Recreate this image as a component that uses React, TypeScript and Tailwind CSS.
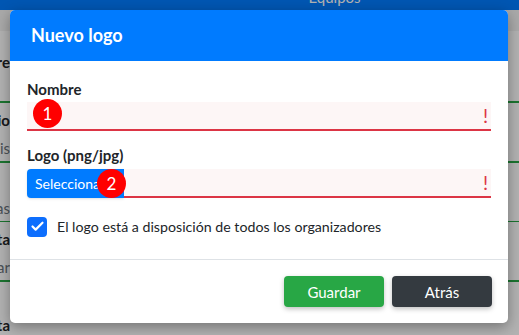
import { Check } from "lucide-react";

function Badge({ n }: { n: number }) {
  return (
    <span className="absolute flex h-[29px] w-[29px] items-center justify-center rounded-full bg-[#ff0000] text-[17px] leading-none text-white">
      {n}
    </span>
  );
}

function Peek({ text, bold, className }: { text: string; bold?: boolean; className: string }) {
  return (
    <div
      className={`flex h-[20px] w-[10px] justify-end whitespace-nowrap text-[15px] leading-[20px] ${
        bold ? "font-bold text-[#212529]" : "text-[#6c757d]"
      } ${className}`}
    >
      {text}
    </div>
  );
}

function Background() {
  return (
    <div className="flex h-full flex-col bg-white">
      <div className="flex h-[12px] items-start justify-center overflow-hidden bg-[#007bff] pl-[150px] text-[15px] leading-[20px] text-white">
        <span className="-mt-[13px]">Equipos</span>
      </div>
      <div className="h-[25px] bg-[#f2f2f2]" />
      <Peek text="Nombre" bold className="mt-[21px]" />
      <div className="mt-[29px] h-[2px] w-full bg-[#28a745]" />
      <Peek text="Descripcio" bold className="mt-[7px]" />
      <Peek text="Mis" className="mt-[8px]" />
      <div className="mt-[3px] h-[2px] w-full bg-[#28a745]" />
      <Peek text="Cas" className="mt-[35px]" />
      <div className="mt-[3px] h-[2px] w-full bg-[#28a745]" />
      <Peek text="Meta" bold className="mt-[7px]" />
      <Peek text="Par" className="mt-[8px]" />
      <div className="mt-[3px] h-[2px] w-full bg-[#28a745]" />
      <Peek text="Resta" bold className="mt-[33px]" />
    </div>
  );
}

export default function App() {
  return (
    <div
      className="relative h-[335px] w-[519px] overflow-hidden"
      style={{ fontFamily: '"Segoe UI", Lato, "Noto Sans", sans-serif' }}
    >
      <Background />
      <div className="absolute inset-0 bg-black/30" />
      <div className="absolute left-[10px] top-[10px] w-[498px] rounded-[5px] bg-white shadow-[0_4px_14px_rgba(0,0,0,0.35)]">
        <div className="flex h-[51px] items-center rounded-t-[5px] bg-[#007bff] pl-[21px] text-[18px] font-bold text-white">
          Nuevo logo
        </div>
        <div className="flex flex-col px-[17px] pt-[17px] pb-[22px]">
          <label className="text-[15px] font-bold leading-[22px] text-[#212529]">Nombre</label>
          <div className="relative mt-[2px] flex h-[29px] items-center border-b-2 border-[#dc3545] bg-[#fdf6f6]">
            <div className="absolute left-[6px] top-[-3px]">
              <Badge n={1} />
            </div>
            <span className="ml-auto mr-[3px] text-[19px] leading-none text-[#dc3545]">!</span>
          </div>
          <label className="mt-[13px] text-[15px] font-bold leading-[22px] text-[#212529]">
            Logo (png/jpg)
          </label>
          <div className="relative mt-[3px] flex h-[29px] items-center">
            <div className="flex h-full w-[97px] items-center overflow-hidden whitespace-nowrap rounded-l-[4px] bg-[#007bff] pl-[8px] text-[14px] text-white shadow-sm">
              Selecciona
            </div>
            <div className="flex h-full flex-1 items-center border-b-2 border-[#dc3545] bg-[#fdf6f6]">
              <span className="ml-auto mr-[3px] text-[19px] leading-none text-[#dc3545]">!</span>
            </div>
            <div className="absolute left-[70px] top-[0px]">
              <Badge n={2} />
            </div>
          </div>
          <div className="mt-[18px] flex items-center gap-[10px]">
            <span className="flex h-[20px] w-[20px] items-center justify-center rounded-[4px] bg-[#0d6efd]">
              <Check className="h-[15px] w-[15px] text-white" strokeWidth={3.5} />
            </span>
            <span className="text-[14.2px] text-[#212529]">
              El logo está a disposición de todos los organizadores
            </span>
          </div>
        </div>
        <div className="flex justify-end gap-[8px] border-t border-[#dee2e6] px-[16px] pt-[16px] pb-[16px]">
          <button className="h-[31px] w-[100px] rounded-[4px] bg-[#28a745] text-[15px] text-white shadow-[0_2px_5px_rgba(0,0,0,0.25)]">
            Guardar
          </button>
          <button className="h-[31px] w-[100px] rounded-[4px] bg-[#343a40] text-[15px] text-white shadow-[0_2px_5px_rgba(0,0,0,0.25)]">
            Atrás
          </button>
        </div>
      </div>
    </div>
  );
}
